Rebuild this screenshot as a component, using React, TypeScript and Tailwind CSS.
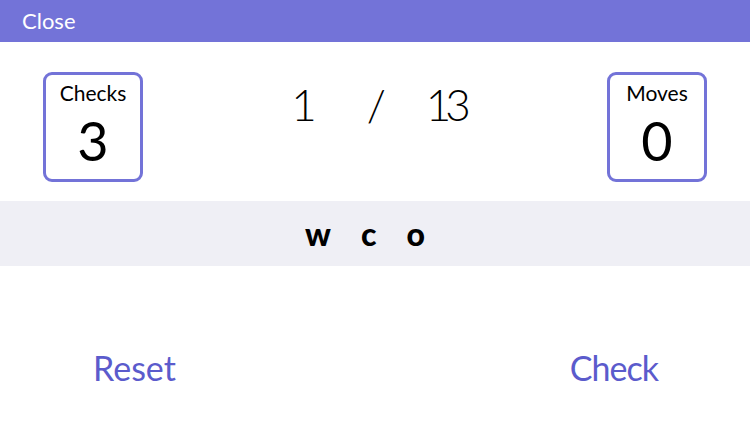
const font = { fontFamily: 'Lato, "Noto Sans", sans-serif' }

function StatBox({ label, value }: { label: string; value: number }) {
  return (
    <div className="w-[100px] h-[110px] border-[3px] border-[#7373d8] rounded-[9px] bg-white flex flex-col items-center">
      <div className="text-[21px] leading-none mt-[7px] text-black">{label}</div>
      <div className="text-[54px] leading-none mt-[11px] text-black">{value}</div>
    </div>
  )
}

export default function App() {
  const letters = ['w', 'c', 'o']

  return (
    <div className="w-[750px] h-[423px] bg-white flex flex-col" style={font}>
      {/* Top bar */}
      <div className="h-[42px] bg-[#7373d8] flex items-center px-[22px]">
        <button className="text-white text-[22px] leading-none">Close</button>
      </div>

      {/* Counters */}
      <div className="flex items-start justify-between px-[43px] pt-[30px] h-[159px]">
        <StatBox label="Checks" value={3} />
        <div className="flex items-center text-[44px] leading-none font-light text-black mt-[10px] ml-[6px]">
          <span>1</span>
          <span className="ml-[50px]">/</span>
          <span className="ml-[40px] tracking-[-6px]">13</span>
        </div>
        <StatBox label="Moves" value={0} />
      </div>

      {/* Letters strip */}
      <div className="h-[65px] bg-[#efeff5] flex items-center justify-center gap-[30px] pr-[20px]">
        {letters.map((l) => (
          <span key={l} className="text-[32px] font-black leading-none text-black">
            {l}
          </span>
        ))}
      </div>

      {/* Actions */}
      <div className="flex-1 flex items-start justify-between pl-[93px] pr-[92px] pt-[85px]">
        <button className="text-[#5b5bcc] text-[34px] leading-none">Reset</button>
        <button className="text-[#5b5bcc] text-[34px] leading-none tracking-[-1px]">Check</button>
      </div>
    </div>
  )
}
